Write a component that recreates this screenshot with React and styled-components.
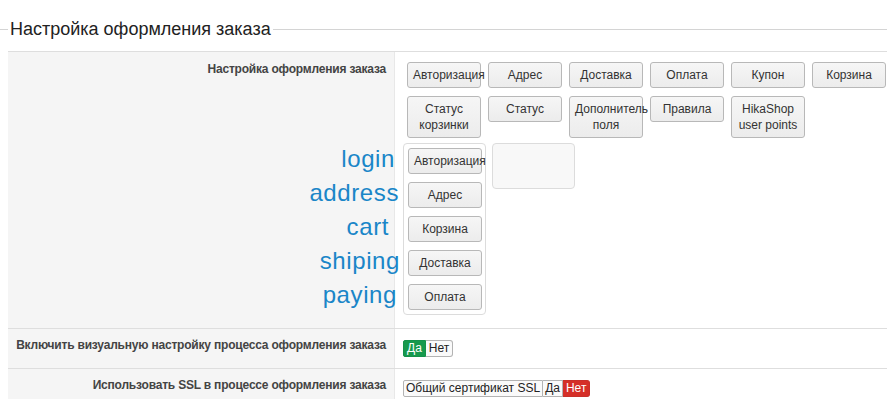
import React from "react";
import styled, { createGlobalStyle } from "styled-components";

const Global = createGlobalStyle`
  html, body { margin: 0; padding: 0; background: #fff; }
  body { font-family: "Liberation Sans", Arial, sans-serif; color: #333; }
`;

const Fieldset = styled.fieldset`
  margin: 18px 0 0 0;
  padding: 11px 0 0 8px;
  border: none;
  border-top: 1px solid #d4d4d4;
  min-width: 0;
`;

const Legend = styled.legend`
  padding: 0 2px;
  font-size: 18px;
  line-height: 22px;
  color: #222;
`;

const Row = styled.div`
  display: grid;
  grid-template-columns: 387px 1fr;
  border-top: 1px solid #dedede;
  background: #fff;
`;

const LabelCell = styled.div`
  box-sizing: border-box;
  background: #f5f5f5;
  border-right: 1px solid #e8e8e8;
  padding: ${(p) => p.$pad || "10px 8px 0 0"};
  text-align: right;
  font-size: 12px;
  line-height: 15px;
  font-weight: bold;
  letter-spacing: -0.2px;
  color: #444;
`;

const ValueCell = styled.div`
  padding: ${(p) => p.$pad || "10px 0 0 8px"};
`;

const ButtonGrid = styled.div`
  display: flex;
  flex-wrap: wrap;
  align-items: flex-start;
  gap: 8px 7px;
  margin-left: 4px;
`;

const Step = styled.div`
  box-sizing: border-box;
  width: 74px;
  padding: 4px 5px;
  border: 1px solid #b8b8b8;
  border-radius: 3px;
  background: linear-gradient(#f6f6f6, #ececec);
  font-size: 12px;
  line-height: 16px;
  color: #333;
  text-align: center;
  white-space: normal;
`;

const SortArea = styled.div`
  display: flex;
  align-items: flex-start;
  gap: 6px;
`;

const SortBox = styled.div`
  box-sizing: border-box;
  width: 83px;
  min-height: ${(p) => (p.$empty ? "46px" : "0")};
  padding: 4px;
  border: 1px solid #dcdcdc;
  border-radius: 4px;
  background: ${(p) => (p.$empty ? "#f8f8f8" : "#fff")};
  display: flex;
  flex-direction: column;
  gap: 8px;
`;

const Annotations = styled.div`
  display: flex;
  flex-direction: column;
  align-items: flex-end;
  padding-top: 4px;
`;

const Note = styled.span`
  font-family: "Liberation Sans", Arial, sans-serif;
  font-weight: normal;
  font-size: 24px;
  line-height: 34px;
  letter-spacing: 0.6px;
  color: #1a86c8;
  margin-right: ${(p) => p.$nudge}px;
`;

const Toggle = styled.div`
  display: flex;
  width: max-content;
  font-size: 12px;
  line-height: 15px;
  font-weight: normal;
`;

const Opt = styled.span`
  padding: 0 ${(p) => p.$px || 3}px;
  border: 1px solid ${(p) => (p.$on === "green" ? "#15914a" : p.$on === "red" ? "#c8302a" : "#b3b3b3")};
  border-left-width: ${(p) => (p.$first ? 1 : 0)}px;
  background: ${(p) => (p.$on === "green" ? "#17994d" : p.$on === "red" ? "#d52f28" : "#fafafa")};
  color: ${(p) => (p.$on ? "#fff" : "#222")};
  border-radius: ${(p) => (p.$first ? "2px 0 0 2px" : p.$last ? "0 3px 3px 0" : "0")};
`;

const topSteps = [
  "Авторизация",
  "Адрес",
  "Доставка",
  "Оплата",
  "Купон",
  "Корзина",
  "Статус корзинки",
  "Статус",
  "Дополнитель поля",
  "Правила",
  "HikaShop user points",
];

const chosen = ["Авторизация", "Адрес", "Корзина", "Доставка", "Оплата"];

const notes = [
  ["login", -1],
  ["address", -5],
  ["cart", 5],
  ["shiping", -6],
  ["paying", -3],
];

export default function App() {
  return (
    <>
      <Global />
      <Fieldset>
        <Legend>Настройка оформления заказа</Legend>
        <Row>
          <LabelCell>Настройка оформления заказа</LabelCell>
          <ValueCell $pad="10px 0 0 8px">
            <ButtonGrid>
              {topSteps.map((s) => (
                <Step key={s}>{s}</Step>
              ))}
            </ButtonGrid>
          </ValueCell>
          <LabelCell $pad="0">
            <Annotations>
              {notes.map(([t, n]) => (
                <Note key={t} $nudge={n}>
                  {t}
                </Note>
              ))}
            </Annotations>
          </LabelCell>
          <ValueCell $pad="5px 0 13px 8px">
            <SortArea>
              <SortBox>
                {chosen.map((s) => (
                  <Step key={s}>{s}</Step>
                ))}
              </SortBox>
              <SortBox $empty />
            </SortArea>
          </ValueCell>
        </Row>
        <Row>
          <LabelCell $pad="9px 8px 11px 0">
            Включить визуальную настройку процесса оформления заказа
          </LabelCell>
          <ValueCell $pad="11px 0 11px 8px">
            <Toggle>
              <Opt $first $on="green">Да</Opt>
              <Opt $last>Нет</Opt>
            </Toggle>
          </ValueCell>
        </Row>
        <Row>
          <LabelCell $pad="9px 8px 11px 0">
            Использовать SSL в процессе оформления заказа
          </LabelCell>
          <ValueCell $pad="11px 0 11px 8px">
            <Toggle>
              <Opt $first $px={2}>Общий сертификат SSL</Opt>
              <Opt $px={2}>Да</Opt>
              <Opt $last $on="red">Нет</Opt>
            </Toggle>
          </ValueCell>
        </Row>
      </Fieldset>
    </>
  );
}
